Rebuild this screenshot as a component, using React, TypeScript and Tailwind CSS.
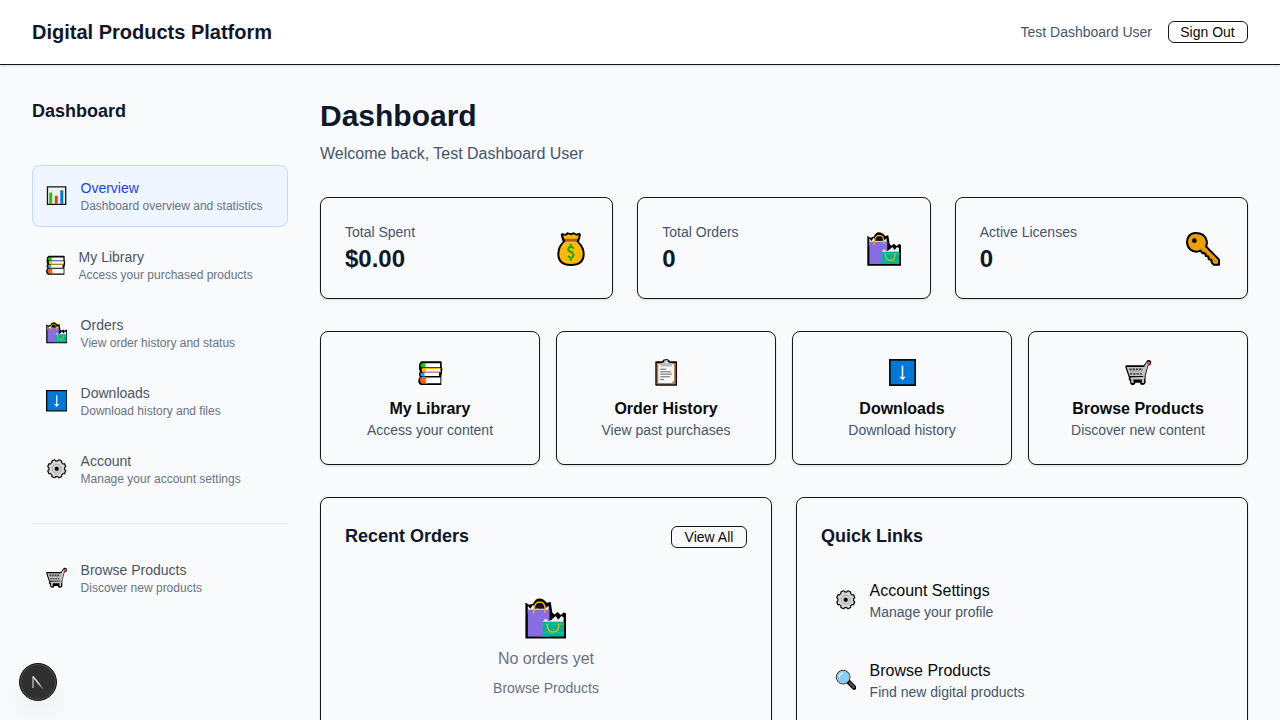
import type { ReactNode } from "react";

type IconName = "chart" | "books" | "bags" | "download" | "gear" | "cart" | "money" | "key" | "clipboard" | "search";

const gearTeeth = [0, 45, 90, 135, 180, 225, 270, 315];

const art: Record<IconName, { box: string; body: ReactNode }> = {
  chart: {
    box: "48 29 66 66",
    body: (
      <>
        <path d="M52.5 34.5h56v54h-56z" fill="#f3f3f3" stroke="#111" strokeWidth="4" />
        <path d="M54 47h53M54 61h53M54 75h53M67 36v51M81 36v51M94 36v51" stroke="#dedede" strokeWidth="1.5" />
        <path d="M58 52h9v35h-9z" fill="#16c60c" />
        <path d="M75 62h9v25h-9z" fill="#f03a17" />
        <path d="M92 45h9v42h-9z" fill="#0078d7" />
      </>
    ),
  },
  books: {
    box: "21 27 82 82",
    body: (
      <>
        <path d="M35 34h58q3 0 3 3v13q4 8 1 15v5l-2 8v28H34q-9-2-9-13 0-8 5-11-3-3-3-8 0-6 3-8-4-6-3-17 0-11 8-15z" fill="#000" />
        <path d="M47 39h-9q-6 2-6 7t5 7h10z" fill="#16c60c" />
        <path d="M47 40h44v12H47q-3-6 0-12z" fill="#fff" />
        <path d="M93 54H38q-6 5 0 13h55v-4H48q-4-3 0-5h45z" fill="#ffb900" />
        <path d="M48 57h44v7H48q-3-3 0-7z" fill="#fff" />
        <path d="M45 68h-10q-6 3-4 9l5 3h11z" fill="#3a8ee8" />
        <path d="M45 68h43v11H45q-4-5 0-11z" fill="#fff" />
        <path d="M50 82H36q-7 2-6 10 1 9 8 10h14z" fill="#f7630c" />
        <path d="M50 83h42v18H50q-6-8 0-18z" fill="#fff" />
      </>
    ),
  },
  bags: {
    box: "23 34 102 102",
    body: (
      <>
        <path d="M24 45l9 6 10-3q6-13 16-13t18 11l10-2 4 26 5 5 8-6 8 7 7-6 6 2v63H24z" fill="#000" />
        <path d="M30 53l6 8 7-10 6 10 5-8 5 8 7-4 6 4 10-8v20H30z" fill="#f0f0f4" />
        <path d="M30 63h54v67H30z" fill="#886ce4" />
        <path d="M47 60v-7q11-14 23 0v8z" fill="#111" />
        <path d="M44 73l2-13q1-15 13-16 13 0 14 15v12" fill="none" stroke="#f2ad00" strokeWidth="4" />
        <path d="M67 94l7-9 8 7 7-4 10-9 7 9 7-9 6 3v13z" fill="#eee" />
        <path d="M67 93h53v37H67z" fill="#00b294" />
        <path d="M67 99h53M67 121h53" stroke="#00cc9d" strokeWidth="3" />
        <path d="M78 98q0 21 15 21t14-21" fill="none" stroke="#f2b500" strokeWidth="3.5" />
      </>
    ),
  },
  download: {
    box: "21 27 81 81",
    body: (
      <>
        <path d="M23.5 29.5h76v76h-76z" fill="#0078d7" stroke="#050b12" strokeWidth="5" />
        <path d="M61.5 47v38" stroke="#fff" strokeWidth="4.5" />
        <path d="M52 80h4l5.5 3 5.5-3h4l-9.5 11z" fill="#fff" />
      </>
    ),
  },
  gear: {
    box: "45 248 66 66",
    body: (
      <>
        {gearTeeth.map((a) => (
          <rect key={a} x="70.5" y="251" width="15" height="14" rx="4" fill="#111" transform={`rotate(${a + 22.5} 78 281)`} />
        ))}
        <circle cx="78" cy="281" r="26" fill="#111" />
        {gearTeeth.map((a) => (
          <rect key={a} x="73.5" y="255" width="9" height="10" rx="2" fill="#d8d8d8" transform={`rotate(${a + 22.5} 78 281)`} />
        ))}
        <circle cx="78" cy="281" r="22.5" fill="#d8d8d8" />
        <circle cx="78" cy="281" r="14" fill="#d9d9d9" stroke="#888" strokeWidth="2" />
        <circle cx="78" cy="281" r="8" fill="#999" />
        <circle cx="78" cy="281" r="6" fill="#000" />
      </>
    ),
  },
  cart: {
    box: "23 26 82 82",
    body: (
      <>
        <path d="M25 45h55l7-10q2-6 8-6 8 0 8 8t-9 9l-8 30-1 15q2 2 0 8t-9 6-8-7H55q-2 8-9 7-9-1-8-13l-4-3 1-6-11-32z" fill="#000" />
        <path d="M28 50h53l8-14 5 2-11 40-3 10H40v-5l38-2v-3H37z" fill="#c2c2c2" />
        <path d="M36 57h41M38 71h36" stroke="#191919" strokeWidth="4" strokeDasharray="7 3" />
        <path d="M37 62h38" stroke="#555" strokeWidth="1.5" />
        <path d="M40 84h43" stroke="#c8c8c8" strokeWidth="4" />
        <path d="M42 86h7v13h-7zM74 86h7v13h-7z" fill="#bbb" />
        <path d="M89 40l4-6h6l1 5-6 5z" fill="#ff5130" />
      </>
    ),
  },
  money: {
    box: "27 34 102 102",
    body: (
      <>
        <path d="M51 37l9 3 7-5 10 3 9-3 8 4 10-3 4 6-6 21q17 16 17 37 0 36-41 36T37 100q0-23 16-37l-6-21z" fill="#000" />
        <path d="M54 44l9 1 7-4 8 3 9-3 7 4 8-1-4 11H58z" fill="#ffb900" />
        <path d="M58 54h40l-3 8H61z" fill="#a4582f" />
        <path d="M62 62h32q19 18 19 38 0 30-35 30t-35-30q0-23 19-38z" fill="#ffb900" />
        <path d="M86 84q-4-8-11-5-8 4-4 11l10 6q7 5 3 12-6 7-15-2M77 70v9M77 111v9" fill="none" stroke="#12a813" strokeWidth="6" />
      </>
    ),
  },
  key: {
    box: "23 34 102 102",
    body: (
      <>
        <path
          d="M52 37c-17 0-26 13-26 27 0 17 13 29 28 29q7 0 12-3l7 8 8-1 1 9 8 1 1 9 8 1 1 9 6 6h16v-15L83 77q4-7 2-17Q79 37 52 37z"
          fill="#e9a000"
          stroke="#000"
          strokeWidth="6"
          strokeLinejoin="round"
        />
        <path d="M65 81l51 45" stroke="#c37a00" strokeWidth="3" />
        <circle cx="48" cy="60" r="7" fill="#000" />
      </>
    ),
  },
  clipboard: {
    box: "20 27 82 82",
    body: (
      <>
        <path d="M29 34h19q2-6 12-7 10 1 12 7h19q2 0 2 2v70q0 2-2 2H29q-2 0-2-2V36q0-2 2-2z" fill="#050505" />
        <path d="M31 39h58v65H31z" fill="#b97843" />
        <path d="M36 42h48v58H36z" fill="#f7f7f7" />
        <path d="M42 50v-9l11-4q0-7 7-7t7 7l11 4v9z" fill="#bbb" />
        <circle cx="60" cy="38" r="2.5" fill="#fff" />
        <path d="M42 58h18M42 66h33M42 73h36M42 81h29M42 89h11" stroke="#666" strokeWidth="3" />
        <path d="M84 93v8h-9z" fill="#c78955" />
      </>
    ),
  },
  search: {
    box: "0 0 66 66",
    body: (
      <>
        <path d="M40 38l19 19" stroke="#000" strokeWidth="14" strokeLinecap="round" />
        <path d="M45 43l13 13" stroke="#555" strokeWidth="7" strokeLinecap="round" />
        <circle cx="25" cy="25" r="21" fill="#75c7fb" stroke="#222" strokeWidth="3" />
        <circle cx="25" cy="25" r="18" fill="#83cffc" stroke="#bdbdbd" strokeWidth="3" />
        <path d="M13 25q1-11 12-12" fill="none" stroke="#d7f2ff" strokeWidth="4" />
      </>
    ),
  },
};

function Icon({ name, className }: { name: IconName; className: string }) {
  return (
    <svg viewBox={art[name].box} className={`shrink-0 ${className}`} aria-hidden="true">
      {art[name].body}
    </svg>
  );
}

const nav: { icon: IconName; title: string; sub: string; slot: string }[] = [
  { icon: "books", title: "My Library", sub: "Access your purchased products", slot: "w-[22.6px]" },
  { icon: "bags", title: "Orders", sub: "View order history and status", slot: "w-[24.6px]" },
  { icon: "download", title: "Downloads", sub: "Download history and files", slot: "w-[24.6px]" },
  { icon: "gear", title: "Account", sub: "Manage your account settings", slot: "w-[24.6px]" },
];

function NavItem({ icon, title, sub, slot, active = false }: { icon: IconName; title: string; sub: string; slot: string; active?: boolean }) {
  return (
    <a className={`flex items-center gap-3 rounded-lg p-3 ${active ? "border border-blue-200 bg-blue-50 text-blue-700" : "text-gray-600"}`}>
      <span className={`flex shrink-0 justify-center ${slot}`}>
        <Icon name={icon} className="size-[21.5px]" />
      </span>
      <span className="block">
        <span className="block text-sm">{title}</span>
        <span className="block text-xs text-gray-500">{sub}</span>
      </span>
    </a>
  );
}

const stats: { icon: IconName; label: string; value: string; slot: string }[] = [
  { icon: "money", label: "Total Spent", value: "$0.00", slot: "w-[35px]" },
  { icon: "bags", label: "Total Orders", value: "0", slot: "w-[42.4px]" },
  { icon: "key", label: "Active Licenses", value: "0", slot: "w-[41px]" },
];

const actions: { icon: IconName; title: string; sub: string }[] = [
  { icon: "books", title: "My Library", sub: "Access your content" },
  { icon: "clipboard", title: "Order History", sub: "View past purchases" },
  { icon: "download", title: "Downloads", sub: "Download history" },
  { icon: "cart", title: "Browse Products", sub: "Discover new content" },
];

const links: { icon: IconName; title: string; sub: string }[] = [
  { icon: "gear", title: "Account Settings", sub: "Manage your profile" },
  { icon: "search", title: "Browse Products", sub: "Find new digital products" },
];

export default function App() {
  return (
    <div className="h-screen overflow-hidden bg-slate-50 font-['Liberation_Sans',Arial,sans-serif] text-slate-900">
      <header className="flex h-[65px] items-center justify-between border-b border-neutral-900 bg-white px-8 shadow-sm">
        <div className="text-xl font-bold">Digital Products Platform</div>
        <div className="flex items-center gap-4 text-sm">
          <span className="text-slate-600">Test Dashboard User</span>
          <button className="w-20 rounded-md border border-neutral-900 pr-px text-neutral-950">Sign Out</button>
        </div>
      </header>

      <div className="flex gap-8 px-8 pt-8">
        <aside className="w-64 shrink-0">
          <h2 className="mb-10 text-lg font-bold">Dashboard</h2>
          <nav className="flex flex-col gap-2">
            <NavItem icon="chart" title="Overview" sub="Dashboard overview and statistics" slot="w-[23.5px]" active />
            {nav.map((n) => (
              <NavItem key={n.title} {...n} />
            ))}
          </nav>
          <div className="mt-6 border-t border-gray-200 pt-6">
            <NavItem icon="cart" title="Browse Products" sub="Discover new products" slot="w-[24.6px]" />
          </div>
        </aside>

        <main className="min-w-0 flex-1">
          <h1 className="pt-px text-3xl/9 font-bold">Dashboard</h1>
          <p className="-mb-px mt-2 text-slate-600">Welcome back, Test Dashboard User</p>

          <section className="mt-8 grid grid-cols-3 gap-6">
            {stats.map((s) => (
              <div key={s.label} className="flex items-center justify-between rounded-lg border border-neutral-900 p-6 shadow-sm">
                <div>
                  <div className="text-sm text-slate-600">{s.label}</div>
                  <div className="-mb-px pt-px text-2xl font-bold">{s.value}</div>
                </div>
                <span className={`flex justify-center pt-px ${s.slot}`}>
                  <Icon name={s.icon} className="size-[34px]" />
                </span>
              </div>
            ))}
          </section>

          <section className="mt-8 grid grid-cols-4 gap-4">
            {actions.map((a) => (
              <div key={a.title} className="rounded-lg border border-neutral-900 p-6 text-center shadow-sm">
                <div className="mb-2 flex h-8 items-center justify-center pt-px">
                  <Icon name={a.icon} className="size-[27px]" />
                </div>
                <div className="-mb-px pt-px font-bold text-neutral-950">{a.title}</div>
                <div className="text-sm text-slate-600">{a.sub}</div>
              </div>
            ))}
          </section>

          <section className="mt-8 grid grid-cols-2 gap-6">
            <div className="h-80 rounded-lg border border-neutral-900 p-6 shadow-sm">
              <div className="flex h-7 items-center justify-between">
                <h3 className="text-lg font-bold">Recent Orders</h3>
                <button className="mt-0.5 w-[76px] rounded-md border border-neutral-900 text-sm text-neutral-950">View All</button>
              </div>
              <div className="mt-12 flex flex-col items-center">
                <Icon name="bags" className="mr-0.5 size-[41px]" />
                <p className="mt-2 text-gray-500">No orders yet</p>
                <a className="mt-[7px] text-sm text-gray-500">Browse Products</a>
              </div>
            </div>
            <div className="h-80 rounded-lg border border-neutral-900 p-6 shadow-sm">
              <h3 className="mb-4 text-lg font-bold">Quick Links</h3>
              <div className="flex flex-col gap-3">
                {links.map((l) => (
                  <a key={l.title} className="flex items-center gap-3 p-3">
                    <span className="flex w-[24.6px] justify-center">
                      <Icon name={l.icon} className="size-[21.5px]" />
                    </span>
                    <span className="block">
                      <span className="-mb-px block pt-px text-neutral-950">{l.title}</span>
                      <span className="block text-sm text-slate-600">{l.sub}</span>
                    </span>
                  </a>
                ))}
              </div>
            </div>
          </section>
        </main>
      </div>

      <button className="fixed bottom-[19px] left-[19px] flex size-[38px] items-center justify-center rounded-full border border-[#111] bg-[#303030] shadow-[inset_0_0_0_1px_#505050,0_16px_32px_-8px_rgba(0,0,0,0.14)]">
        <svg viewBox="0 0 14 16" className="h-4 w-3.5" fill="none" aria-hidden="true">
          <defs>
            <linearGradient id="stroke-fade" x1="2" y1="2" x2="12" y2="15" gradientUnits="userSpaceOnUse">
              <stop offset="0.5" stopColor="#ddd" />
              <stop offset="1" stopColor="#ddd" stopOpacity="0.15" />
            </linearGradient>
          </defs>
          <path d="M2 14V2.5" stroke="#b5b5b5" strokeWidth="1.4" />
          <path d="M2 2.5L12 15" stroke="url(#stroke-fade)" strokeWidth="1.5" />
        </svg>
      </button>
    </div>
  );
}
